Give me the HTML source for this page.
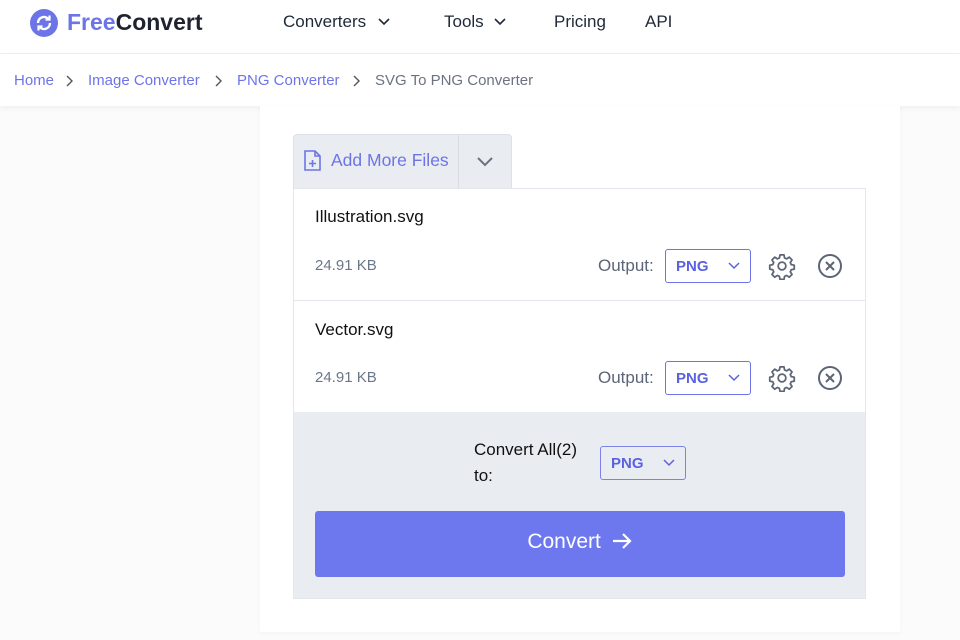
<!DOCTYPE html>
<html><head><style>
*{margin:0;padding:0;box-sizing:border-box}
body{width:960px;height:640px;overflow:hidden;background:#fbfbfc;font-family:"Liberation Sans",sans-serif;position:relative}
.a{position:absolute}
.hdr{left:0;top:0;width:960px;height:54px;background:#fff;border-bottom:1px solid #eceef2}
.bc{left:0;top:54px;width:960px;height:52px;background:#fff;box-shadow:0 2px 6px rgba(0,0,0,.05)}
.nav{font-size:17px;color:#1f2937;top:12px}
.bct{font-size:15px;top:72px;color:#6d74e8}
.card{left:260px;top:106px;width:640px;height:526px;background:#fff;box-shadow:0 1px 4px rgba(0,0,0,.04)}
.sel{width:86px;height:34px;border:1px solid #6d74e8;border-radius:3px;background:#fff;color:#5b62e0;font-weight:bold;font-size:15px;padding:8px 0 0 10px}
.sel svg{position:absolute;right:10px;top:12px}
.lab{font-size:17px;color:#5b6577}
.fn{font-size:17px;color:#111}
.kb{font-size:15px;color:#6b7689}
</style></head><body>
<div class="a hdr"></div>
<svg class="a" style="left:30px;top:9px" width="28" height="28" viewBox="0 0 28 28"><circle cx="14" cy="14" r="14" fill="#6d74e8"/><path d="M8 14a6 6 0 0 1 10.5-4M20 14a6 6 0 0 1-10.5 4" stroke="#fff" stroke-width="2.4" fill="none"/><path d="M19.5 6.5v4h-4M8.5 21.5v-4h4" stroke="#fff" stroke-width="2.2" fill="none"/></svg>
<div class="a" style="left:67px;top:9px;font-size:23px;font-weight:bold;color:#6d74e8">Free<span style="color:#1f2330">Convert</span></div>
<div class="a nav" style="left:283px">Converters</div>
<svg class="a" style="left:378px;top:18px" width="12" height="8"><path d="M1 1l5 5 5-5" stroke="#1f2937" stroke-width="1.6" fill="none"/></svg>
<div class="a nav" style="left:444px">Tools</div>
<svg class="a" style="left:494px;top:18px" width="12" height="8"><path d="M1 1l5 5 5-5" stroke="#1f2937" stroke-width="1.6" fill="none"/></svg>
<div class="a nav" style="left:554px">Pricing</div>
<div class="a nav" style="left:645px">API</div>
<div class="a bc"></div>
<div class="a bct" style="left:14px">Home</div>
<svg class="a" style="left:66px;top:75px" width="8" height="12"><path d="M1 1l5 5-5 5" stroke="#555" stroke-width="1.4" fill="none"/></svg>
<div class="a bct" style="left:88px">Image Converter</div>
<svg class="a" style="left:215px;top:75px" width="8" height="12"><path d="M1 1l5 5-5 5" stroke="#555" stroke-width="1.4" fill="none"/></svg>
<div class="a bct" style="left:237px">PNG Converter</div>
<svg class="a" style="left:353px;top:75px" width="8" height="12"><path d="M1 1l5 5-5 5" stroke="#555" stroke-width="1.4" fill="none"/></svg>
<div class="a bct" style="left:375px;color:#6b7280">SVG To PNG Converter</div>
<div class="a card"></div>
<div class="a" style="left:293px;top:134px;width:219px;height:55px;background:#e9ecf1;border:1px solid #dde1e7;border-bottom:none;border-radius:4px 4px 0 0"></div>
<div class="a" style="left:458px;top:135px;width:1px;height:54px;background:#d9dde3"></div>
<svg class="a" style="left:303px;top:150px" width="19" height="22" viewBox="0 0 19 22"><path d="M2 1h10l5 5v14H2z" fill="none" stroke="#6d74e8" stroke-width="1.6"/><path d="M12 1v5h5M9.5 10v7M6 13.5h7" stroke="#6d74e8" stroke-width="1.6" fill="none"/></svg>
<div class="a" style="left:331px;top:150px;font-size:17.5px;color:#6d74e8">Add More Files</div>
<svg class="a" style="left:476px;top:156px" width="18" height="11"><path d="M2 2l7 7 7-7" stroke="#6b7280" stroke-width="2" fill="none"/></svg>
<div class="a" style="left:293px;top:188px;width:573px;height:411px;border:1px solid #e3e6eb;background:#fff"></div>
<div class="a" style="left:294px;top:300px;width:571px;height:1px;background:#e3e6eb"></div>
<div class="a fn" style="left:315px;top:207px">Illustration.svg</div>
<div class="a kb" style="left:315px;top:257px">24.91 KB</div>
<div class="a lab" style="left:598px;top:256px">Output:</div>
<div class="a sel" style="left:665px;top:249px">PNG<svg width="12" height="8"><path d="M1 1l5 5 5-5" stroke="#5b62e0" stroke-width="1.5" fill="none"/></svg></div>
<div class="a fn" style="left:315px;top:320px">Vector.svg</div>
<div class="a kb" style="left:315px;top:369px">24.91 KB</div>
<div class="a lab" style="left:598px;top:368px">Output:</div>
<div class="a sel" style="left:665px;top:361px">PNG<svg width="12" height="8"><path d="M1 1l5 5 5-5" stroke="#5b62e0" stroke-width="1.5" fill="none"/></svg></div>
<svg class="a" style="left:768px;top:252px" width="28" height="28" viewBox="0 0 24 24"><path d="M10.3 2.5h3.4l.5 2.6 1.8.8 2.2-1.5 2.4 2.4-1.5 2.2.8 1.8 2.6.5v3.4l-2.6.5-.8 1.8 1.5 2.2-2.4 2.4-2.2-1.5-1.8.8-.5 2.6h-3.4l-.5-2.6-1.8-.8-2.2 1.5-2.4-2.4 1.5-2.2-.8-1.8-2.6-.5v-3.4l2.6-.5.8-1.8-1.5-2.2 2.4-2.4 2.2 1.5 1.8-.8z" fill="none" stroke="#5b6577" stroke-width="1.5" stroke-linejoin="round"/><circle cx="12" cy="12" r="3.3" fill="none" stroke="#5b6577" stroke-width="1.5"/></svg>
<svg class="a" style="left:768px;top:364px" width="28" height="28" viewBox="0 0 24 24"><path d="M10.3 2.5h3.4l.5 2.6 1.8.8 2.2-1.5 2.4 2.4-1.5 2.2.8 1.8 2.6.5v3.4l-2.6.5-.8 1.8 1.5 2.2-2.4 2.4-2.2-1.5-1.8.8-.5 2.6h-3.4l-.5-2.6-1.8-.8-2.2 1.5-2.4-2.4 1.5-2.2-.8-1.8-2.6-.5v-3.4l2.6-.5.8-1.8-1.5-2.2 2.4-2.4 2.2 1.5 1.8-.8z" fill="none" stroke="#5b6577" stroke-width="1.5" stroke-linejoin="round"/><circle cx="12" cy="12" r="3.3" fill="none" stroke="#5b6577" stroke-width="1.5"/></svg>
<svg class="a" style="left:817px;top:253px" width="26" height="26" viewBox="0 0 26 26"><circle cx="13" cy="13" r="11" fill="none" stroke="#5b6577" stroke-width="2"/><path d="M9 9l8 8M17 9l-8 8" stroke="#5b6577" stroke-width="2"/></svg>
<svg class="a" style="left:817px;top:365px" width="26" height="26" viewBox="0 0 26 26"><circle cx="13" cy="13" r="11" fill="none" stroke="#5b6577" stroke-width="2"/><path d="M9 9l8 8M17 9l-8 8" stroke="#5b6577" stroke-width="2"/></svg>
<div class="a" style="left:294px;top:412px;width:571px;height:186px;background:#e9ecf1"></div>
<div class="a" style="left:474px;top:437px;font-size:17px;color:#111;line-height:26px">Convert All(2)<br>to:</div>
<div class="a sel" style="left:600px;top:446px;border-color:#7c83e8;background:#e9ecf1">PNG<svg width="12" height="8"><path d="M1 1l5 5 5-5" stroke="#5b62e0" stroke-width="1.5" fill="none"/></svg></div>
<div class="a" style="left:315px;top:511px;width:530px;height:66px;background:#6d78ee;border-radius:3px;color:#fff;font-size:21px;text-align:center;line-height:62px">Convert <svg width="22" height="18" style="vertical-align:-2px;margin-left:4px"><path d="M2 9h17M12 2l7 7-7 7" stroke="#fff" stroke-width="2.2" fill="none"/></svg></div>
</body></html>
